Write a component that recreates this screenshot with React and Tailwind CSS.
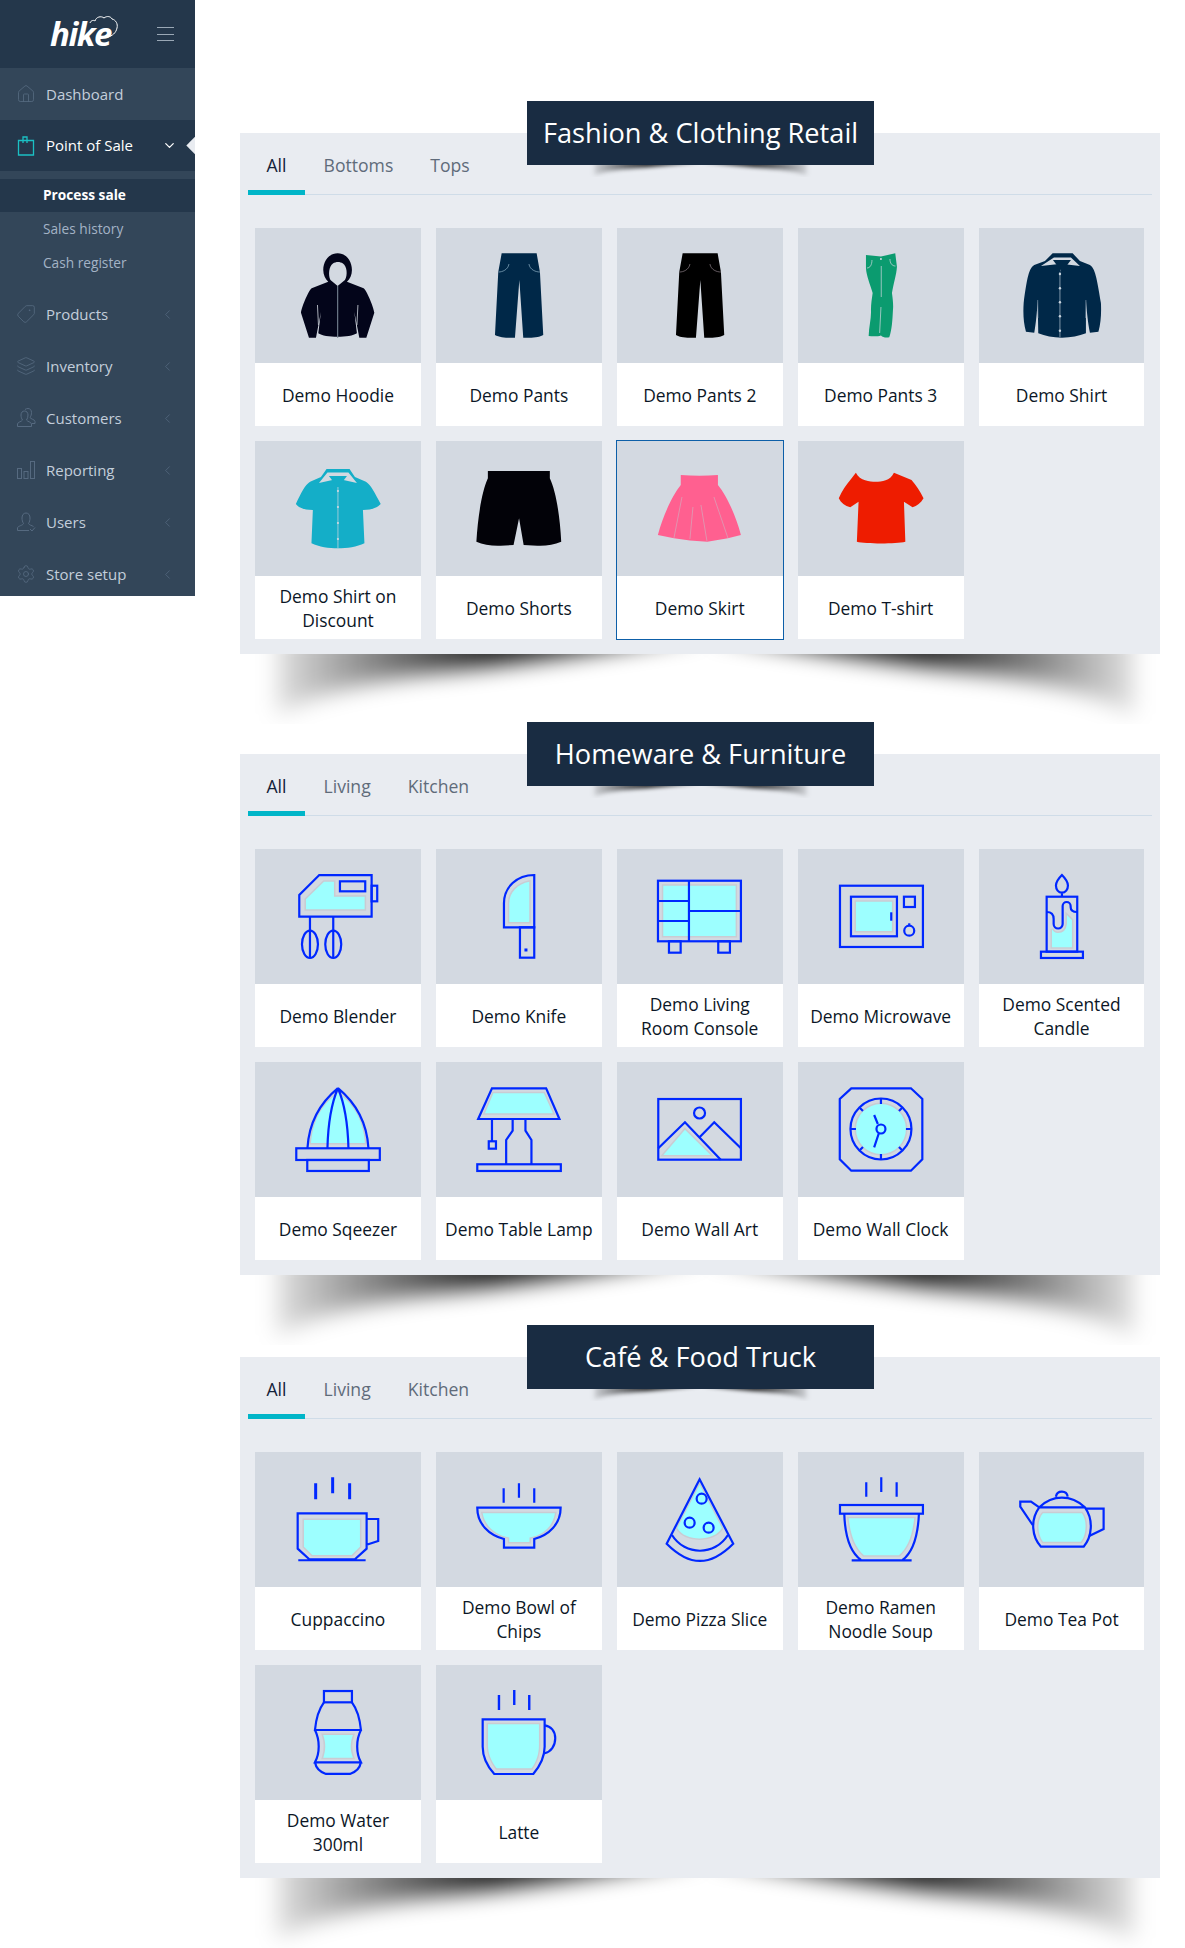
import { ChevronDown, ChevronLeft, House, Layers, Settings, Tag } from 'lucide-react';

const BLUE = '#0028ff';
const AQUA = '#9dffff';
const HALO = '#c9ccd3';
const ICON = '#566a80';

function Line({ children }) {
  return (
    <svg viewBox="0 0 166 135" className="block h-[135px] w-full" fill="none" stroke={BLUE} strokeWidth="2.2">
      {children}
    </svg>
  );
}

// the pale fill sits a little inside the outline, with a grey halo round it
function Fill({ d }) {
  return <path d={d} fill={AQUA} stroke={HALO} strokeWidth="3" paintOrder="stroke" />;
}

function Flat({ color, children }) {
  return (
    <svg viewBox="0 0 166 135" className="block h-[135px] w-full" fill={color}>
      {children}
    </svg>
  );
}

const Hoodie = (
  <Flat color="#03051a">
    <path d="M82.7 25.3C74 25.3 68.3 33 68.3 42C68.3 47 70.5 51 73.3 53.7L56.7 60.3C54 62 47 78 46 84.7L54 109.7H61L66 84L63.3 105.3C70 110 95 110 102 105.3L99.4 84L104.4 109.7H111.4L119.4 84.7C118.4 78 111.4 62 108.7 60.3L92 53.7C95 51 97 47 97 42C97 33 91.4 25.3 82.7 25.3Z" />
    <path d="M82.7 58L75.5 52C73 47 74 38 78 35.5C81 33.5 85 33.5 88 35.5C92 38 93 47 90 52Z" fill="#d3d9e1" />
    <path d="M82.7 58V109.7" stroke="#6d7a88" strokeWidth="1.2" />
    <path d="M62.5 77L63.5 97M103 77L102 97" stroke="#d3d9e1" strokeWidth="0.8" />
  </Flat>
);

const pantsPath = 'M65.7 25.3H100.7L104 44L107.3 107C102 110 92 110 87.3 109.7L83.4 52L79 109.7C74 110 64 110 59 107L62.3 44Z';

function Pants({ color, pocket }) {
  return (
    <Flat color={color}>
      <path d={pantsPath} />
      <path d="M62.7 44C66 44 72 42 73 36M104 44C100 44 94 42 93 36" fill="none" stroke={pocket} strokeWidth="0.7" />
    </Flat>
  );
}

const PantsGreen = (
  <Flat color="#0b9b6f">
    <path d="M68 27L83 28.5L97.3 25.3L99 38.7C98.5 47 95.5 55 94 65C95 72 95.5 78 95 82C94.5 92 94 102 91.3 109.3C88 110 85 109.5 83 107.5C80 108.5 75 108.5 70.7 108C71 98 73.5 90 73 82C73 76 74 70 74.7 65C72 56 68.5 48 68 40.3Z" />
    <path d="M83.3 38V69M83 79L81.7 105M69 40C72 40 74 37 74 32M97.5 38C94 38 92 35 92 31" fill="none" stroke="#d3d9e1" strokeWidth="0.7" />
    <circle cx="83" cy="31" r="1" fill="#d3d9e1" />
  </Flat>
);

const Shirt = (
  <Flat color="#002848">
    <path d="M73.7 25.3H93.7L101 33L111 37C116 40 118 50 122 75C122.5 85 122 95 119.5 103.7L111 104.7C109 95 108 85 107 72L107 105.3C100 108 92 109.7 83 109.7C74 109.7 66 108 59.3 105.3L58.7 72C58 85 57 95 55.3 104.7L47 103.7C44.5 95 44 85 44.7 75C48 50 50 40 55.3 37L66 33Z" />
    <path d="M75 29.5H92L101 38L84 36L82 43.7L80 36L62 38Z" fill="#d3d9e1" />
    <path d="M74 32H92L83 44Z" />
    <path d="M81 44V109" stroke="#8ba0b2" strokeWidth="0.9" />
    <path d="M58.7 72L59 90M107 72L106.7 90" stroke="#8ba0b2" strokeWidth="0.6" />
    {[46, 60.3, 74.3, 88.3, 102.7].map((y) => (
      <circle key={y} cx="81" cy={y} r="1.2" fill="#c8d4de" />
    ))}
  </Flat>
);

const ShirtShort = (
  <Flat color="#14aec8">
    <path d="M71.6 28H94.6L100 36L111 40.7C116 44 120 52 125.8 63C123 66 118 69 108 69L109.5 102.3C102 106 92 107.3 83 107.3C74 107.3 64 106 56.5 102.3L57.9 69C48 69 43 66 40.9 63C46 52 50 44 55.1 40.7L66 36Z" />
    <path d="M72.5 31.5H93.5L102 42L84 38L83 46L82 38L64 42Z" fill="#d3d9e1" />
    <path d="M74 35H92L83 47Z" />
    <path d="M83 46V107" stroke="#d3d9e1" strokeWidth="0.7" />
    {[50, 66, 82, 98].map((y) => (
      <circle key={y} cx="83" cy={y} r="1.1" fill="#d3d9e1" />
    ))}
  </Flat>
);

const Shorts = (
  <Flat color="#020208">
    <path d="M51.9 30H113.9V37.3C120 50 124 75 125.3 100.7C118 104 110 105 101.5 104.7L87.7 104L83.1 77.3L77.6 104L64.7 104.7C56 105 47 104 40.4 100.7C42 75 46 50 51.9 37.3Z" />
  </Flat>
);

const Skirt = (
  <Flat color="#ff6090">
    <path d="M63.8 34C76 35 89 35 101 34V44C110 55 119 75 124 94L111 97.3L90.4 100.7L73 99.5L57 97.3L40.9 94C46 75 55 55 63.8 44Z" />
    <path d="M65 56L57 97M76 66L73 98M84 64L90 100M97 56L111 97" fill="none" stroke="#d9a0b6" strokeWidth="0.8" />
  </Flat>
);

const TShirt = (
  <Flat color="#ee1c00">
    <path d="M57.9 31.7C62 40 72 40.7 77.6 40.7C84 40.7 92 40 96 31.7L113.6 39C118 44 122 50 125.6 57.3C123 62 119 65 114.6 66.3L106 60.7L107.4 100.7C98 103 68 103 58.9 100.7L60.6 60.7L52.3 66.3C47 65 43 62 40.8 57.3C44 50 48 44 52.3 39Z" />
  </Flat>
);

const Blender = (
  <Line>
    <Fill d="M51 50.3L69 32.7H79V47.7H109.7V60.3H51Z" />
    <path d="M64.3 26H116.7V67.7H44.3V46Z" />
    <rect x="85" y="32.3" width="25.3" height="10" />
    <rect x="116.7" y="36.7" width="5.6" height="15.6" />
    <path d="M55 67.7V109M78.3 67.7V109" />
    <ellipse cx="55" cy="95.3" rx="8" ry="13.7" />
    <ellipse cx="78.3" cy="95.3" rx="8" ry="13.7" />
  </Line>
);

const Knife = (
  <Line>
    <Fill d="M93.3 32.7C82 35 73.3 43 73.3 54.3V73H93.3Z" />
    <path d="M98.3 26C81 26 68 38 68 54.3V78.3H98.3Z" />
    <rect x="84" y="78.3" width="14.3" height="30.4" />
    <rect x="88.5" y="99.5" width="3" height="3" fill={BLUE} stroke="none" />
  </Line>
);

const Console = (
  <Line>
    <Fill d="M46.3 36.7H118.7V87H46.3Z" />
    <rect x="41" y="31.7" width="83" height="60.6" />
    <path d="M72 31.7V92.3M41 52H72M41 72H72M72 62H124" />
    <rect x="52" y="92.3" width="11.7" height="11.4" />
    <rect x="101.3" y="92.3" width="11.7" height="11.4" />
  </Line>
);

const Microwave = (
  <Line>
    <rect x="42" y="36.7" width="83" height="61.3" />
    <Fill d="M58 52.7H94V82H58Z" />
    <rect x="53" y="47.7" width="46" height="39.6" />
    <path d="M93.3 63.3V71.7" />
    <rect x="106" y="47.7" width="11" height="10.3" />
    <circle cx="111.3" cy="81.7" r="5" />
    <path d="M111.3 74.3V77" />
  </Line>
);

const Candle = (
  <Line>
    <Fill d="M73 80Q75 84 79 84Q87 84 88 75V66L93 71V98.3H73Z" />
    <path d="M83 26C79 30 77 33 77 36.5C77 40.5 79.5 43.7 83 43.7C86.5 43.7 89 40.5 89 36.5C89 33 87 30 83 26ZM83 43.7V47.7" />
    <rect x="67.7" y="47.7" width="30.6" height="55" />
    <rect x="62" y="102.7" width="42" height="6.3" />
    <path d="M67.7 63Q74.7 63 74.7 70V75A4.5 4.5 0 0 0 83.7 75V57A4 4 0 0 1 91.7 57V58Q91.7 63 98.3 63" />
  </Line>
);

const Squeezer = (
  <Line>
    <Fill d="M56 81C58 55 70 40 83 31C96 40 108 55 110 81Z" />
    <path d="M83 26C66 40 54 60 52.5 86M83 26C100 40 112 60 113.5 86M83 26C75 45 73 65 72.5 86M83 26C91 45 93 65 93.5 86" />
    <rect x="41.3" y="86.3" width="83.6" height="11.7" />
    <rect x="52.3" y="98" width="61.6" height="11" />
  </Line>
);

const Lamp = (
  <Line>
    <Fill d="M57.4 31.3H107.9L117 51.3H49Z" />
    <path d="M56 26.3H110.2L123.5 57H42.2Z" />
    <path d="M56 57V79.3M76.7 57V68.7L70.2 78V102.3M89.5 57V68.7L95.5 78V102.3" />
    <rect x="52.8" y="79.3" width="7.2" height="7.4" />
    <rect x="41.3" y="102.3" width="83.6" height="6.7" />
  </Line>
);

const WallArt = (
  <Line>
    <Fill d="M46.4 93H93.7L68 67.7Z" />
    <rect x="41.3" y="37" width="82.7" height="60.7" />
    <circle cx="82.6" cy="51" r="5.5" />
    <path d="M41.3 86.3L68 60.3L103.8 97.7M83.1 74.7L97.3 60.3L124 86.3" />
  </Line>
);

const Clock = (
  <Line>
    <circle cx="83" cy="67" r="25" fill={AQUA} stroke={HALO} strokeWidth="3" paintOrder="stroke" />
    <path d="M53.3 26.3H113L124.4 37V97.3L113 108.7H53.3L41.8 97.3V37Z" />
    <circle cx="83" cy="67" r="30.5" />
    <path d="M83 37V42M83 92V97M53 67H58M108 67H113M62 46L65 49M104 46L101 49M62 88L65 85M104 88L101 85" />
    <circle cx="83" cy="67" r="4.5" />
    <path d="M76.2 53L79.9 62M76.2 85.3L80.8 71.5" />
  </Line>
);

const Cuppaccino = (
  <Line>
    <Fill d="M49 68H105V94.7L96.7 103H57.3L49 94.7Z" />
    <path d="M42.7 61.3H111.7V96.7L100 107.3H54.3L42.7 96.7ZM43.3 108.3H110.7M111.7 67H123.3V89L111.7 92.7" />
    <path d="M60.7 31.3V47.3M77.7 25.3V41.3M94.7 31.3V47.3" strokeWidth="3" />
  </Line>
);

const Bowl = (
  <Line>
    <Fill d="M46.7 61.3H119C117 74 108 83 93.5 85.5V90H73.3V85.5C59 83 49 74 46.7 61.3Z" />
    <path d="M41.3 55.7H124.7C124.7 72 113 83 98.3 87V95.7H68V87C53 83 41.3 72 41.3 55.7Z" />
    <path d="M67.7 36.3V50.7M83 31.3V45.7M98.3 36.3V50.7" />
  </Line>
);

const Pizza = (
  <Line>
    <Fill d="M82.7 32.7L60.3 76C68 90 97 90 105 76Z" />
    <path d="M82.7 27.3L49.7 91.7C62 104 72 109 83 109C94 109 104 104 116.3 91.7Z" />
    <path d="M55 83C68 104 98 104 111 83" />
    <circle cx="84.7" cy="46.7" r="5" />
    <circle cx="72.7" cy="70.7" r="5" />
    <circle cx="91.7" cy="75.7" r="5" />
  </Line>
);

const Ramen = (
  <Line>
    <Fill d="M50.7 66.3H116.3C114 85 110 95 101 103.3H66C57 95 53 85 50.7 66.3Z" />
    <rect x="42" y="53" width="83" height="8.7" />
    <path d="M46.3 61.7C47 85 52 100 63 108M121 61.7C120 85 115 100 104.7 108M53.7 108.3H113.7" />
    <path d="M68.3 30.3V44.7M83.3 25.3V40M98.7 30.3V44.7" />
  </Line>
);

const TeaPot = (
  <Line>
    <Fill d="M64 61.3H103C108 68 108 82 102 89.7H64C58 82 58 68 64 61.3Z" />
    <path d="M60.3 55.3C68 48 76 45.7 83 45.7C90 45.7 98 48 106 55.3C115 68 113 85 104.7 94.7H62C53 85 51 68 60.3 55.3ZM60.3 55.3H106" />
    <path d="M77 44.7C78 38 88 38 88.7 44.7M60.3 55.3L52 49.7H41.3V54.7L53.7 73M107 56.7H124.7V77L110.3 84" />
  </Line>
);

const Bottle = (
  <Line>
    <Fill d="M68.3 70H98C95 78 95 85 98 92.7H68.3C71 85 71 78 68.3 70Z" />
    <rect x="69" y="26" width="28" height="11.3" />
    <path d="M69 37.3C64 44 61 54 60 65H106C105 54 102 44 97 37.3M60 65C65 75 65 88 60 97.3H106C101 88 101 75 106 65M60 97.3C61 103 65 107 71 109H95C101 107 105 103 106 97.3" />
  </Line>
);

const Latte = (
  <Line>
    <Fill d="M52 59.3H103V80C103 90 100 97 95.7 103.3H60.7C56 97 52 90 52 80Z" />
    <path d="M46.7 54.3H108.7V81.7C108.7 92 104 101 97.3 109H58.3C51 101 46.7 92 46.7 81.7Z" />
    <path d="M108.7 60.3C115 61 119.3 66 119.3 73.3C119.3 81 115 87 108.7 88.3" />
    <path d="M63 30V45M78.3 25V40M93.3 30V45" strokeWidth="2.4" />
  </Line>
);

const sections = [
  {
    title: 'Fashion & Clothing Retail',
    tabs: ['All', 'Bottoms', 'Tops'],
    items: [
      ['Demo Hoodie', Hoodie],
      ['Demo Pants', <Pants color="#002848" pocket="#8fb0c4" />],
      ['Demo Pants 2', <Pants color="#000000" pocket="#8d8088" />],
      ['Demo Pants 3', PantsGreen],
      ['Demo Shirt', Shirt],
      ['Demo Shirt on Discount', ShirtShort],
      ['Demo Shorts', Shorts],
      ['Demo Skirt', Skirt, true],
      ['Demo T-shirt', TShirt],
    ],
  },
  {
    title: 'Homeware & Furniture',
    tabs: ['All', 'Living', 'Kitchen'],
    className: 'mt-[100px]',
    items: [
      ['Demo Blender', Blender],
      ['Demo Knife', Knife],
      ['Demo Living Room Console', Console],
      ['Demo Microwave', Microwave],
      ['Demo Scented Candle', Candle],
      ['Demo Sqeezer', Squeezer],
      ['Demo Table Lamp', Lamp],
      ['Demo Wall Art', WallArt],
      ['Demo Wall Clock', Clock],
    ],
  },
  {
    title: 'Café & Food Truck',
    tabs: ['All', 'Living', 'Kitchen'],
    className: 'mt-[82px]',
    items: [
      ['Cuppaccino', Cuppaccino],
      ['Demo Bowl of Chips', Bowl],
      ['Demo Pizza Slice', Pizza],
      ['Demo Ramen Noodle Soup', Ramen],
      ['Demo Tea Pot', TeaPot],
      ['Demo Water 300ml', Bottle],
      ['Latte', Latte],
    ],
  },
];

function CurvedShadow({ className }) {
  return (
    <svg viewBox="0 0 909 70" preserveAspectRatio="none" className={className}>
      <defs>
        <filter id="soft" x="-10%" y="-100%" width="120%" height="300%">
          <feGaussianBlur stdDeviation="11" />
        </filter>
        <linearGradient id="leftFade">
          <stop offset="0" stopColor="#000" stopOpacity="0.12" />
          <stop offset="0.18" stopColor="#000" stopOpacity="0.4" />
          <stop offset="0.5" stopColor="#000" stopOpacity="0.9" />
          <stop offset="1" stopColor="#000" stopOpacity="0.95" />
        </linearGradient>
        <linearGradient id="rightFade">
          <stop offset="0" stopColor="#000" stopOpacity="0.95" />
          <stop offset="0.5" stopColor="#000" stopOpacity="0.9" />
          <stop offset="0.82" stopColor="#000" stopOpacity="0.4" />
          <stop offset="1" stopColor="#000" stopOpacity="0.12" />
        </linearGradient>
      </defs>
      <path d="M26 -20H452Q310 4 190 18T26 62Z" fill="url(#leftFade)" filter="url(#soft)" />
      <path d="M883 -20H458Q600 4 720 18T883 62Z" fill="url(#rightFade)" filter="url(#soft)" />
    </svg>
  );
}

function ProductCard({ name, art, selected }) {
  return (
    <div className={`flex h-[198px] flex-col bg-white ${selected ? 'ring-1 ring-[#0d5fa8]' : ''}`}>
      <div className="h-[135px] bg-[#d3d9e1]">{art}</div>
      <div className="flex flex-1 items-center justify-center px-[8px] text-center text-[17.4px] leading-[24px] text-[#0b1626]">
        {name}
      </div>
    </div>
  );
}

function Section({ title, tabs, items, className = '' }) {
  return (
    <section className={`relative w-[920px] bg-[#e9ecf1] pb-[15px] ${className}`}>
      <CurvedShadow className="absolute left-[11px] top-full h-[70px] w-[909px]" />
      <div className="absolute left-[287px] top-[-32px] z-10 flex h-[64px] w-[347px] items-center justify-center bg-[#192c42] text-[27.2px] text-white">
        {title}
      </div>
      <CurvedShadow className="absolute left-[348px] top-[32px] h-[12px] w-[225px]" />
      <div className="mx-2 flex h-[62px] items-end border-b border-[#cfdce8]">
        {tabs.map((tab, i) => (
          <div
            key={tab}
            className={`mb-[-1px] flex h-[62px] items-center border-b-[5px] px-[18.5px] pt-[8px] text-[17.6px] ${
              i === 0 ? 'border-[#00b5c8] text-[#14233a]' : 'border-transparent text-[#5f6b7a]'
            }`}
          >
            {tab}
          </div>
        ))}
      </div>
      <div className="grid grid-cols-5 gap-[15px] pl-[15px] pr-[15.5px] pt-[33px]">
        {items.map(([name, art, selected]) => (
          <ProductCard key={name} name={name} art={art} selected={selected} />
        ))}
      </div>
    </section>
  );
}

function CustomersIcon() {
  return (
    <svg viewBox="0 0 20 20" className="h-[20px] w-[20px]" fill="none" stroke={ICON} strokeWidth="1">
      <path d="M1.5 18.5V16C1.5 14 6 13.5 6.5 12C5.5 10.5 5 9 5 7C5 4.5 6.5 3 8.5 3C10.5 3 12 4.5 12 7C12 9 11.5 10.5 10.5 12C11 13.5 15.5 14 15.5 16V18.5Z" />
      <path d="M9 1.5C10 0.8 11 0.5 12 0.5C14 0.5 15.5 2 15.5 4.5C15.5 6.5 15 8 14 9.5C14.5 11 19 11.5 19 13.5V15.5H16" />
    </svg>
  );
}

function ReportingIcon() {
  return (
    <svg viewBox="0 0 20 20" className="h-[20px] w-[20px]" fill="none" stroke={ICON} strokeWidth="1">
      <rect x="1.5" y="8.5" width="4" height="10" />
      <rect x="8" y="11.5" width="4" height="7" />
      <rect x="14.5" y="1.5" width="4" height="17" />
    </svg>
  );
}

function UserIcon() {
  return (
    <svg viewBox="0 0 20 20" className="h-[20px] w-[20px]" fill="none" stroke={ICON} strokeWidth="1">
      <path d="M1.5 18.5V16C1.5 14 7 13.5 7.5 11.5C6.5 10 6 8 6 6C6 3 7.5 1 10 1C12.5 1 14 3 14 6C14 8 13.5 10 12.5 11.5C13 13 16 13.5 17.5 14.5" />
      <path d="M1.5 18.5H13M14 17L16 19L19 15.5" />
    </svg>
  );
}

function BagIcon() {
  return (
    <svg viewBox="0 0 20 20" className="h-[20px] w-[20px]" fill="none" stroke="#1bc0c4" strokeWidth="1.3">
      <path d="M2.5 4.5H17.5V19H2.5Z" />
      <path d="M7 7V1H11V7" />
    </svg>
  );
}

function Logo() {
  return (
    <div className="relative h-[36px] w-[72px]">
      <span className="absolute left-0 top-[-7px] font-['Open_Sans'] text-[33px] font-bold italic tracking-[-1.5px] text-white">
        hike
      </span>
      <svg viewBox="0 0 30 24" className="absolute left-[39px] top-[-1px] h-[24px] w-[30px]" fill="none" stroke="#fff" strokeWidth="1">
        <path d="M1 8C2 5 5 5 6 6C7 2 12 0.5 15 3C18 0.5 22 1.5 23 4C27 5 29 9 28 13C27 18 23 21 19 22" />
      </svg>
    </div>
  );
}

function NavItem({ icon, label }) {
  return (
    <div className="flex h-[52px] items-center pl-4 pr-[20px]">
      <div className="flex w-[30px] justify-start">{icon}</div>
      <span className="flex-1 text-[15px] text-[#c3cedb]">{label}</span>
      <ChevronLeft size={15} strokeWidth={1.2} className="text-[#566a80]" />
    </div>
  );
}

function Sidebar() {
  const dim = { size: 20, strokeWidth: 1, className: 'text-[#566a80]' };
  return (
    <aside className="h-[596px] w-[195px] shrink-0 overflow-hidden bg-[#334659]">
      <div className="flex h-[68px] items-center bg-[#24374b] pl-[50px]">
        <Logo />
        <div className="ml-[35px] flex w-[17px] flex-col gap-[5.3px]">
          <div className="h-px bg-[#9aa8b6]" />
          <div className="h-px bg-[#9aa8b6]" />
          <div className="h-px bg-[#9aa8b6]" />
        </div>
      </div>
      <div className="flex h-[52px] items-center pl-4">
        <div className="w-[30px]"><House {...dim} /></div>
        <span className="text-[15px] text-[#c3cedb]">Dashboard</span>
      </div>
      <div className="relative flex h-[51px] items-center bg-[#24374b] pl-4 pr-[18px]">
        <div className="w-[30px]"><BagIcon /></div>
        <span className="flex-1 text-[15px] text-white">Point of Sale</span>
        <ChevronDown size={15} strokeWidth={2} className="text-white" />
        <div className="absolute right-[-7px] top-[19px] h-[13px] w-[13px] rotate-45 bg-[#e9ecf1]" />
      </div>
      <div className="pt-2">
        <div className="flex h-[33px] items-center bg-[#24374b] pl-[43px] text-[13.7px] font-bold text-white">Process sale</div>
        <div className="flex h-[34px] items-center pl-[43px] text-[13.7px] text-[#a3b3c6]">Sales history</div>
        <div className="flex h-[34px] items-center pl-[43px] text-[13.7px] text-[#a3b3c6]">Cash register</div>
      </div>
      <div className="pt-[8px]">
        <NavItem icon={<Tag {...dim} className="-scale-x-100 text-[#566a80]" />} label="Products" />
        <NavItem icon={<Layers {...dim} />} label="Inventory" />
        <NavItem icon={<CustomersIcon />} label="Customers" />
        <NavItem icon={<ReportingIcon />} label="Reporting" />
        <NavItem icon={<UserIcon />} label="Users" />
        <NavItem icon={<Settings {...dim} />} label="Store setup" />
      </div>
    </aside>
  );
}

export default function App() {
  return (
    <div className="flex min-h-[1948px] w-[1185px] items-start overflow-hidden bg-white font-['Open_Sans',sans-serif]">
      <Sidebar />
      <main className="pl-[45px] pt-[133px]">
        {sections.map((s) => (
          <Section key={s.title} {...s} />
        ))}
      </main>
    </div>
  );
}
